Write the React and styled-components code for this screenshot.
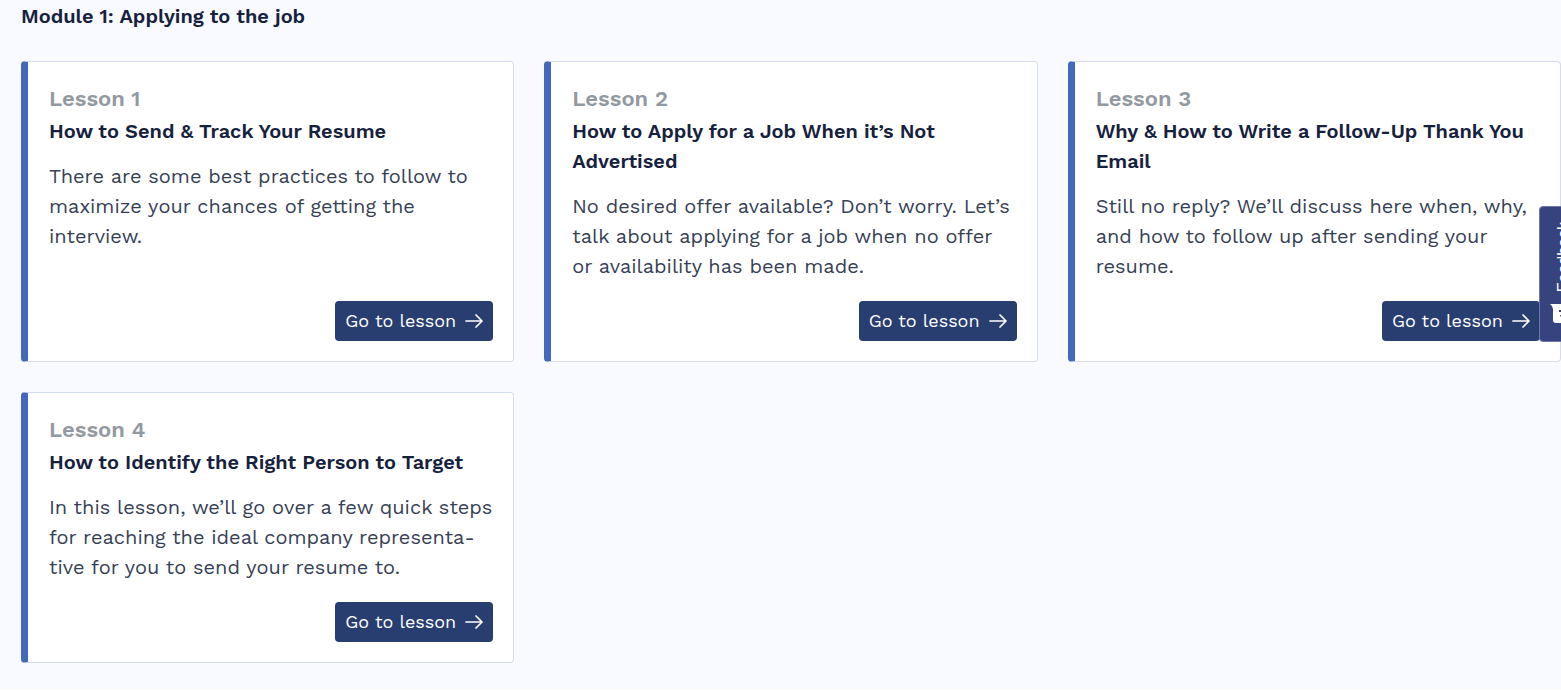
import React from 'react';
import styled, { createGlobalStyle } from 'styled-components';

const GlobalStyle = createGlobalStyle`
  *, *::before, *::after { box-sizing: border-box; }
  body {
    margin: 0;
    background: #ffffff;
    color: #16213e;
    font-family: "Work Sans", Inter, "Open Sans", sans-serif;
    overflow-x: hidden;
  }
`;

const Module = styled.main`
  padding: 1px 0 26px 21px;
  background: #f9faff;
`;

const ModuleTitle = styled.h1`
  margin: 0 0 30px;
  font-size: 20px;
  line-height: 30px;
  font-weight: 600;
`;

const LessonGrid = styled.div`
  display: grid;
  grid-template-columns: repeat(3, minmax(0, 1fr));
  gap: 30px;
`;

const Card = styled.article`
  display: flex;
  flex-direction: column;
  padding: 20px 20px 20px 21px;
  background: #ffffff;
  border: 1px solid #d5dcee;
  border-left: 7px solid #4469bb;
  border-radius: 4px;
`;

const LessonNumber = styled.p`
  margin: 0;
  color: #9299a0;
  font-size: 22px;
  line-height: 34px;
  font-weight: 600;
`;

const LessonTitle = styled.h2`
  margin: 0 0 15px;
  font-size: 20px;
  line-height: 30px;
  font-weight: 600;
`;

const Description = styled.p`
  margin: 0 0 20px;
  color: #364055;
  font-size: 20px;
  line-height: 30px;
  font-weight: 400;
`;

const LessonButton = styled.button`
  display: flex;
  align-items: center;
  justify-content: space-between;
  align-self: flex-end;
  width: 158px;
  height: 40px;
  margin-top: auto;
  padding: 0 10px;
  border: 0;
  border-radius: 4px;
  background: #283e70;
  color: #ffffff;
  font-family: inherit;
  font-size: 18px;
  font-weight: 400;
  line-height: 24px;
  white-space: nowrap;
  cursor: pointer;
`;

const FeedbackTab = styled.button`
  position: fixed;
  top: 206px;
  right: -28px;
  display: flex;
  flex-direction: column;
  align-items: center;
  justify-content: flex-end;
  gap: 12px;
  width: 50px;
  height: 136px;
  padding: 0 0 18px;
  border: 1px solid #6f79a8;
  border-radius: 4px 0 0 4px;
  background: #36437f;
  color: #ffffff;
  cursor: pointer;
`;

const FeedbackLabel = styled.span`
  writing-mode: vertical-rl;
  transform: rotate(180deg);
  font-family: "Liberation Sans", Arial, sans-serif;
  font-size: 16px;
  line-height: 20px;
  font-weight: 400;
`;

const ArrowIcon = () => (
  <svg width="18" height="16" viewBox="0 0 18 16" fill="none" stroke="currentColor" strokeWidth="1.7" strokeLinecap="round" strokeLinejoin="round" aria-hidden="true">
    <path d="M1 8h16M11 2l6 6-6 6" />
  </svg>
);

const ChatIcon = () => (
  <svg width="28" height="19" viewBox="0 0 28 19" aria-hidden="true">
    <path d="M0 0h25a3 3 0 0 1 3 3v13a3 3 0 0 1-3 3H6a3 3 0 0 1-3-3V5Q3 2 0 0Z" fill="#fff" />
    <path d="M9 6h2v2H9zM19 6h2v2h-2zM10 11h10q-1 4-5 4t-5-4Z" fill="#36437f" />
  </svg>
);

const lessons = [
  {
    title: 'How to Send & Track Your Resume',
    text: 'There are some best practices to follow to maximize your chances of getting the interview.',
  },
  {
    title: 'How to Apply for a Job When it’s Not Advertised',
    text: 'No desired offer available? Don’t worry. Let’s talk about applying for a job when no offer or availability has been made.',
  },
  {
    title: 'Why & How to Write a Follow-Up Thank You Email',
    text: 'Still no reply? We’ll discuss here when, why, and how to follow up after sending your resume.',
  },
  {
    title: 'How to Identify the Right Person to Target',
    text: 'In this lesson, we’ll go over a few quick steps for reaching the ideal company representa\u00adtive for you to send your resume to.',
  },
];

export default function App() {
  return (
    <>
      <GlobalStyle />
      <Module>
        <ModuleTitle>Module 1: Applying to the job</ModuleTitle>
        <LessonGrid>
          {lessons.map((lesson, index) => (
            <Card key={lesson.title}>
              <LessonNumber>Lesson {index + 1}</LessonNumber>
              <LessonTitle>{lesson.title}</LessonTitle>
              <Description>{lesson.text}</Description>
              <LessonButton type="button">
                Go to lesson
                <ArrowIcon />
              </LessonButton>
            </Card>
          ))}
        </LessonGrid>
      </Module>
      <FeedbackTab type="button">
        <FeedbackLabel>Feedback</FeedbackLabel>
        <ChatIcon />
      </FeedbackTab>
    </>
  );
}
